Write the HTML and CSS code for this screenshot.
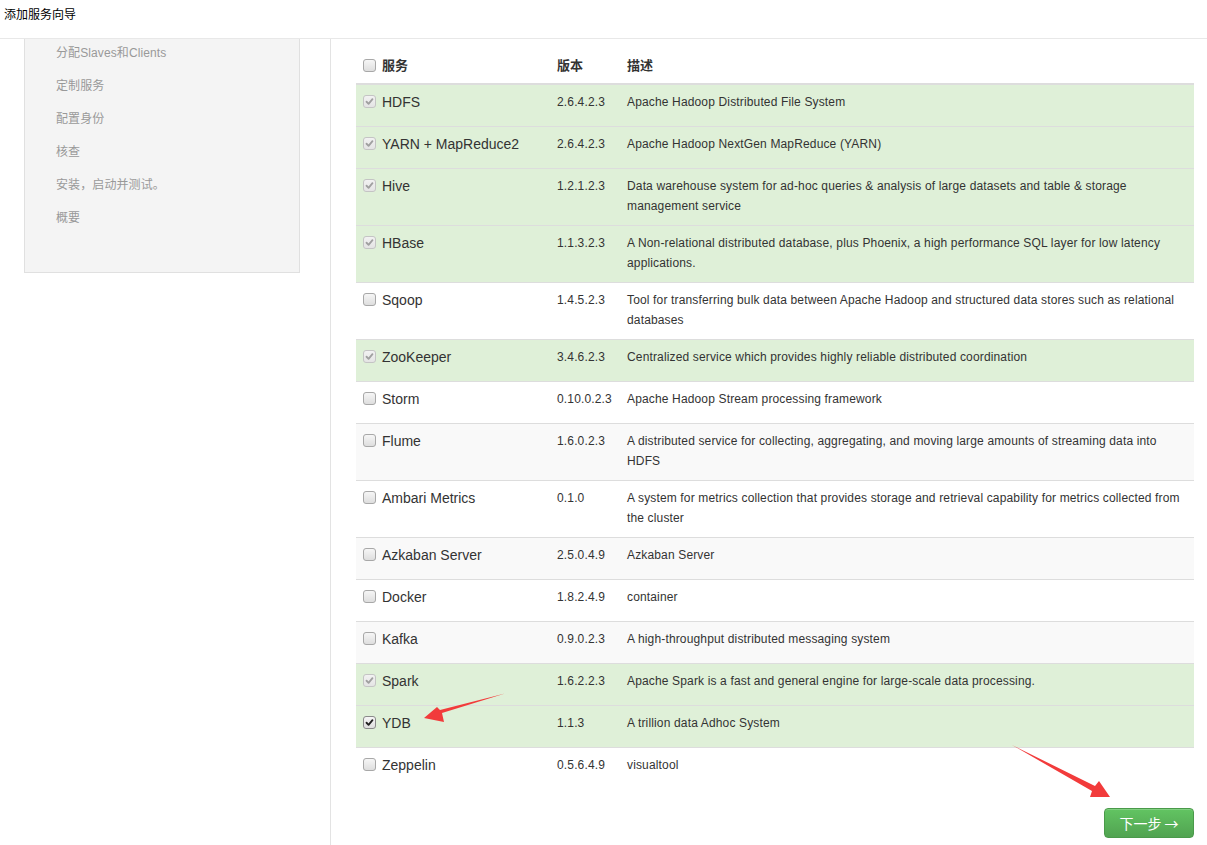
FILE: index.html
```html
<!DOCTYPE html>
<html lang="zh">
<head>
<meta charset="utf-8">
<title>添加服务向导</title>
<link rel="stylesheet" href="styles.css">
</head>
<body>
<div class="page">
  <header class="topbar">添加服务向导</header>
  <div class="layout">
    <aside class="side">
      <div class="side-box">
        <ul class="steps">
          <li>分配Slaves和Clients</li>
          <li>定制服务</li>
          <li>配置身份</li>
          <li>核查</li>
          <li>安装，启动并测试。</li>
          <li>概要</li>
        </ul>
      </div>
    </aside>
    <main class="main">
      <table class="svc">
        <thead>
          <tr>
            <th class="c-name"><span class="nm"><span class="cb"></span>服务</span></th>
            <th class="c-ver">版本</th>
            <th class="c-desc">描述</th>
          </tr>
        </thead>
        <tbody>
          <tr class="ok"><td class="c-name"><span class="nm"><span class="cb dis"><svg viewBox="0 0 13 13"><path d="M3 6.8 L5.4 9.2 L10 3.8" /></svg></span>HDFS</span></td><td>2.6.4.2.3</td><td>Apache Hadoop Distributed File System</td></tr>
          <tr class="ok"><td class="c-name"><span class="nm"><span class="cb dis"><svg viewBox="0 0 13 13"><path d="M3 6.8 L5.4 9.2 L10 3.8" /></svg></span>YARN + MapReduce2</span></td><td>2.6.4.2.3</td><td>Apache Hadoop NextGen MapReduce (YARN)</td></tr>
          <tr class="ok"><td class="c-name"><span class="nm"><span class="cb dis"><svg viewBox="0 0 13 13"><path d="M3 6.8 L5.4 9.2 L10 3.8" /></svg></span>Hive</span></td><td>1.2.1.2.3</td><td>Data warehouse system for ad-hoc queries &amp; analysis of large datasets and table &amp; storage management service</td></tr>
          <tr class="ok"><td class="c-name"><span class="nm"><span class="cb dis"><svg viewBox="0 0 13 13"><path d="M3 6.8 L5.4 9.2 L10 3.8" /></svg></span>HBase</span></td><td>1.1.3.2.3</td><td>A Non-relational distributed database, plus Phoenix, a high performance SQL layer for low latency applications.</td></tr>
          <tr><td class="c-name"><span class="nm"><span class="cb"></span>Sqoop</span></td><td>1.4.5.2.3</td><td>Tool for transferring bulk data between Apache Hadoop and structured data stores such as relational databases</td></tr>
          <tr class="ok"><td class="c-name"><span class="nm"><span class="cb dis"><svg viewBox="0 0 13 13"><path d="M3 6.8 L5.4 9.2 L10 3.8" /></svg></span>ZooKeeper</span></td><td>3.4.6.2.3</td><td>Centralized service which provides highly reliable distributed coordination</td></tr>
          <tr><td class="c-name"><span class="nm"><span class="cb"></span>Storm</span></td><td>0.10.0.2.3</td><td>Apache Hadoop Stream processing framework</td></tr>
          <tr class="alt"><td class="c-name"><span class="nm"><span class="cb"></span>Flume</span></td><td>1.6.0.2.3</td><td>A distributed service for collecting, aggregating, and moving large amounts of streaming data into HDFS</td></tr>
          <tr><td class="c-name"><span class="nm"><span class="cb"></span>Ambari Metrics</span></td><td>0.1.0</td><td>A system for metrics collection that provides storage and retrieval capability for metrics collected from the cluster</td></tr>
          <tr class="alt"><td class="c-name"><span class="nm"><span class="cb"></span>Azkaban Server</span></td><td>2.5.0.4.9</td><td>Azkaban Server</td></tr>
          <tr><td class="c-name"><span class="nm"><span class="cb"></span>Docker</span></td><td>1.8.2.4.9</td><td>container</td></tr>
          <tr class="alt"><td class="c-name"><span class="nm"><span class="cb"></span>Kafka</span></td><td>0.9.0.2.3</td><td>A high-throughput distributed messaging system</td></tr>
          <tr class="ok"><td class="c-name"><span class="nm"><span class="cb dis"><svg viewBox="0 0 13 13"><path d="M3 6.8 L5.4 9.2 L10 3.8" /></svg></span>Spark</span></td><td>1.6.2.2.3</td><td>Apache Spark is a fast and general engine for large-scale data processing.</td></tr>
          <tr class="ok"><td class="c-name"><span class="nm"><span class="cb on"><svg viewBox="0 0 13 13"><path d="M3 6.8 L5.4 9.2 L10 3.8" /></svg></span>YDB</span></td><td>1.1.3</td><td>A trillion data Adhoc System</td></tr>
          <tr><td class="c-name"><span class="nm"><span class="cb"></span>Zeppelin</span></td><td>0.5.6.4.9</td><td>visualtool</td></tr>
        </tbody>
      </table>
      <div class="actions">
        <button class="btn-next">下一步 →</button>
      </div>
    </main>
  </div>
  <svg class="annot" width="1207" height="845" viewBox="0 0 1207 845">
    <polygon points="505,693.5 442,713 444,722 424,718 437,707 440,710" fill="#f23b3b"/>
    <polygon points="1012,745 1095,786 1099,781 1110,797 1090,797 1092,791" fill="#f23b3b"/>
  </svg>
</div>
</body>
</html>
```

FILE: styles.css
```css
* { box-sizing: border-box; }
html, body { margin: 0; padding: 0; background: #fff; }
body {
  font-family: "Liberation Sans", Arial, "Noto Sans CJK SC", sans-serif;
  color: #333;
  width: 1207px;
  height: 845px;
  overflow: hidden;
}
.page { position: relative; width: 1207px; height: 845px; }

.topbar {
  height: 39px;
  padding: 6px 0 0 4px;
  font-size: 12px;
  line-height: 18px;
  color: #000;
  border-bottom: 1px solid #e8e8e8;
}

.layout { display: flex; height: 806px; }

.side {
  width: 331px;
  flex: none;
  padding-left: 24px;
  border-right: 1px solid #e3e3e3;
}
.side-box {
  width: 276px;
  height: 234px;
  background: #f4f4f4;
  border: 1px solid #e0e0e0;
  border-top: none;
  padding: 4px 0 0 31px;
}
.steps { list-style: none; margin: 0; padding: 0; }
.steps li {
  font-size: 12px;
  letter-spacing: 0.1px;
  line-height: 20px;
  height: 20px;
  margin-bottom: 13px;
  color: #999;
}

.main { flex: 1; padding: 8px 14px 0 25px; }

.svc {
  width: 838px;
  border-collapse: collapse;
  table-layout: fixed;
  font-size: 12px;
  letter-spacing: 0.15px;
}
.svc th {
  text-align: left;
  font-weight: bold;
  font-size: 13px;
  line-height: 20px;
  padding: 8px 8px;
  border-bottom: 2px solid #ddd;
  color: #333;
  letter-spacing: 0;
  font-family: "Noto Sans CJK SC", sans-serif;
}
.svc th.c-name { width: 193px; padding-left: 7px; }
.svc th.c-ver { width: 70px; }
.svc td {
  vertical-align: top;
  padding: 7px 8px 9px 8px;
  line-height: 20px;
  border-top: 1px solid #ddd;
}
.svc td.c-name { padding-left: 7px; }
.svc tbody tr:first-child td { border-top: none; }
.svc tr.ok td { background: #dff0d8; }
.svc tr.alt td { background: #f9f9f9; }

.nm {
  display: flex;
  align-items: center;
  height: 25px;
  margin-top: -3px;
  margin-bottom: 3px;
  font-size: 14px;
  letter-spacing: 0;
  line-height: 20px;
}
th .nm { height: 20px; margin: 0; font-size: 13px; }

.cb {
  width: 13px;
  height: 13px;
  flex: none;
  margin-right: 6px;
  border: 1px solid #a8a8a8;
  border-radius: 3px;
  background: linear-gradient(#f6f6f6, #dedede);
  display: inline-flex;
}
.cb svg { width: 11px; height: 11px; }
.cb path { fill: none; stroke-width: 2.2; stroke-linecap: round; stroke-linejoin: round; }
.cb.dis { border-color: #c4c4c4; background: linear-gradient(#f2f2f2, #e4e4e4); }
.cb.dis path { stroke: #a0a0a0; }
.cb.on { border-color: #8a8a8a; }
.cb.on path { stroke: #222; }

.actions { display: flex; justify-content: flex-end; padding-top: 19px; }
.btn-next {
  width: 90px;
  height: 30px;
  border: 1px solid #4a9a4a;
  border-radius: 4px;
  background: linear-gradient(#62c462, #51a351);
  color: #fff;
  font-size: 14px;
  font-family: "Noto Sans CJK SC", sans-serif;
  line-height: 20px;
  padding: 0;
  box-shadow: inset 0 1px 0 rgba(255,255,255,.2);
}

.annot { position: absolute; left: 0; top: 0; pointer-events: none; }
```
